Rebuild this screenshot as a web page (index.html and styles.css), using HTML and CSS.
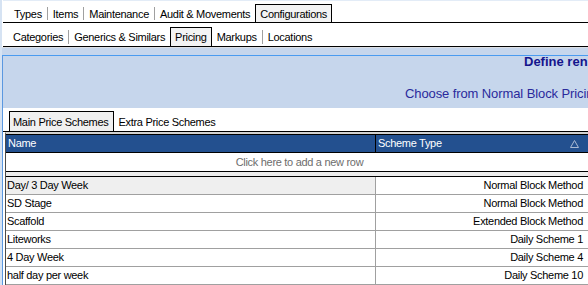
FILE: index.html
```html
<!DOCTYPE html>
<html lang="en">

<head>
    <meta charset="UTF-8">
    <meta name="viewport" content="width=device-width, initial-scale=1.0">
    <title>Configurations - Pricing</title>
    <link rel="stylesheet" href="styles.css">
</head>

<body>
    <div class="tab-strip main-tabs">
        <span class="tab">Types</span><span class="sep"></span>
        <span class="tab">Items</span><span class="sep"></span>
        <span class="tab">Maintenance</span><span class="sep"></span>
        <span class="tab">Audit &amp; Movements</span>
        <span class="tab active">Configurations</span>
    </div>
    <div class="tab-strip sub-tabs">
        <span class="tab">Categories</span><span class="sep"></span>
        <span class="tab">Generics &amp; Similars</span>
        <span class="tab active">Pricing</span>
        <span class="tab">Markups</span><span class="sep"></span>
        <span class="tab">Locations</span>
    </div>

    <div class="workspace">
        <div class="frame">
            <div class="banner">
                <div class="banner-title">Define ren</div>
                <div class="banner-text">Choose from Normal Block Pricin</div>
            </div>

            <div class="scheme-tabs">
                <span class="stab active">Main Price Schemes</span>
                <span class="stab">Extra Price Schemes</span>
            </div>

            <div class="grid">
                <div class="grid-head">
                    <div class="col-name">Name</div>
                    <div class="col-type">
                        <span>Scheme Type</span>
                        <svg class="sort" width="9" height="8" viewBox="0 0 9 8">
                            <polygon points="4.5,0.5 8.5,7.5 0.5,7.5" fill="none" stroke="#a9b9d3" stroke-width="1" />
                        </svg>
                    </div>
                </div>
                <div class="new-row">Click here to add a new row</div>
                <div class="grid-sep"></div>

                <div class="row current">
                    <div class="col-name">Day/ 3 Day Week</div>
                    <div class="col-type">Normal Block Method</div>
                </div>
                <div class="row">
                    <div class="col-name">SD Stage</div>
                    <div class="col-type">Normal Block Method</div>
                </div>
                <div class="row">
                    <div class="col-name">Scaffold</div>
                    <div class="col-type">Extended Block Method</div>
                </div>
                <div class="row">
                    <div class="col-name">Liteworks</div>
                    <div class="col-type">Daily Scheme 1</div>
                </div>
                <div class="row">
                    <div class="col-name">4 Day Week</div>
                    <div class="col-type">Daily Scheme 4</div>
                </div>
                <div class="row">
                    <div class="col-name">half day per week</div>
                    <div class="col-type">Daily Scheme 10</div>
                </div>
            </div>
        </div>
    </div>
</body>

</html>
```

FILE: styles.css
```css
html,
body {
    overflow: hidden;
}

body {
    margin: 0;
    height: 285px;
    background-color: white;
    border-left: 2px solid #d6e3f3;
    font-family: 'Liberation Sans', Arial, sans-serif;
    font-size: 11px;
    letter-spacing: -0.3px;
    color: black;
}

/* top tab strips */
.tab-strip {
    display: flex;
    align-items: flex-end;
    margin-left: 1px;
    border-bottom: 1px solid black;
    white-space: nowrap;
}

.main-tabs {
    height: 21px;
    padding-left: 6px;
    border-top: 1px solid #e3ecf7;
}

.sub-tabs {
    height: 23px;
    padding-left: 5px;
}

.tab {
    padding: 0 5px 1px 5px;
    line-height: 14px;
}

.sub-tabs .tab {
    padding-bottom: 2px;
}

.tab.active {
    padding: 2px 4px 1px 4px;
    border: 1px solid black;
    border-bottom: none;
    background-color: #f3f3f3;
}

.sub-tabs .tab.active {
    padding: 2px 4px 2px 4px;
}

.sep {
    width: 1px;
    height: 13px;
    margin-bottom: 2px;
    background-color: #a0a0a0;
}

.sub-tabs .sep {
    height: 14px;
}

/* pricing workspace */
.workspace {
    border-top: 1px solid #dcdfe4;
    padding-top: 7px;
    background-color: #c6d6ec;
}

.frame {
    border-top: 1px solid #4a9bf0;
    border-left: 1px solid #5b98e0;
    background-color: white;
}

.banner {
    height: 52px;
    background-color: #c6d6ec;
    white-space: nowrap;
    overflow: hidden;
}

.banner-title {
    padding-left: 521px;
    font-size: 13px;
    font-weight: bold;
    line-height: 12px;
    letter-spacing: 0;
    color: #14148c;
}

.banner-text {
    margin-top: 18px;
    padding-left: 402px;
    font-size: 13px;
    line-height: 15px;
    letter-spacing: -0.1px;
    color: #2a2a9c;
}

.scheme-tabs {
    display: flex;
    align-items: flex-end;
    height: 23px;
    padding-left: 6px;
    border-bottom: 1px solid black;
    white-space: nowrap;
}

.stab {
    padding: 0 5px 2px 4px;
    line-height: 14px;
}

.stab.active {
    padding: 3px 5px 2px 3px;
    border: 1px solid black;
    border-bottom: none;
    background-color: #f0f0f0;
}

/* grid */
.grid {
    margin-left: 2px;
    border-top: 2px solid #d2d2d2;
    border-left: 1px solid #4a4a4a;
    width: 587px;
}

.grid-head {
    display: flex;
    height: 17px;
    line-height: 17px;
    border-top: 1px solid black;
    border-bottom: 1px solid black;
    background-color: #23508f;
    color: white;
}

.col-name {
    flex: none;
    width: 370px;
    padding-left: 1px;
    box-sizing: border-box;
    border-right: 1px solid #a0a0a0;
}

.col-type {
    flex: none;
    width: 215px;
    padding-right: 8px;
    box-sizing: border-box;
    text-align: right;
}

.grid-head .col-name {
    padding-left: 2px;
    border-right-color: black;
}

.grid-head .col-type {
    display: flex;
    justify-content: space-between;
    align-items: center;
    padding-left: 2px;
    text-align: left;
}

.sort {
    margin-right: 4px;
}

.new-row {
    height: 18px;
    line-height: 18px;
    text-align: center;
    color: #6d6d6d;
}

.grid-sep {
    height: 4px;
    border-top: 1px solid black;
    border-bottom: 1px solid black;
    background-color: #ececec;
}

.row {
    display: flex;
    height: 17px;
    line-height: 17px;
    border-bottom: 1px solid #a0a0a0;
}

.row.current .col-name {
    background-color: #efefef;
}
```
